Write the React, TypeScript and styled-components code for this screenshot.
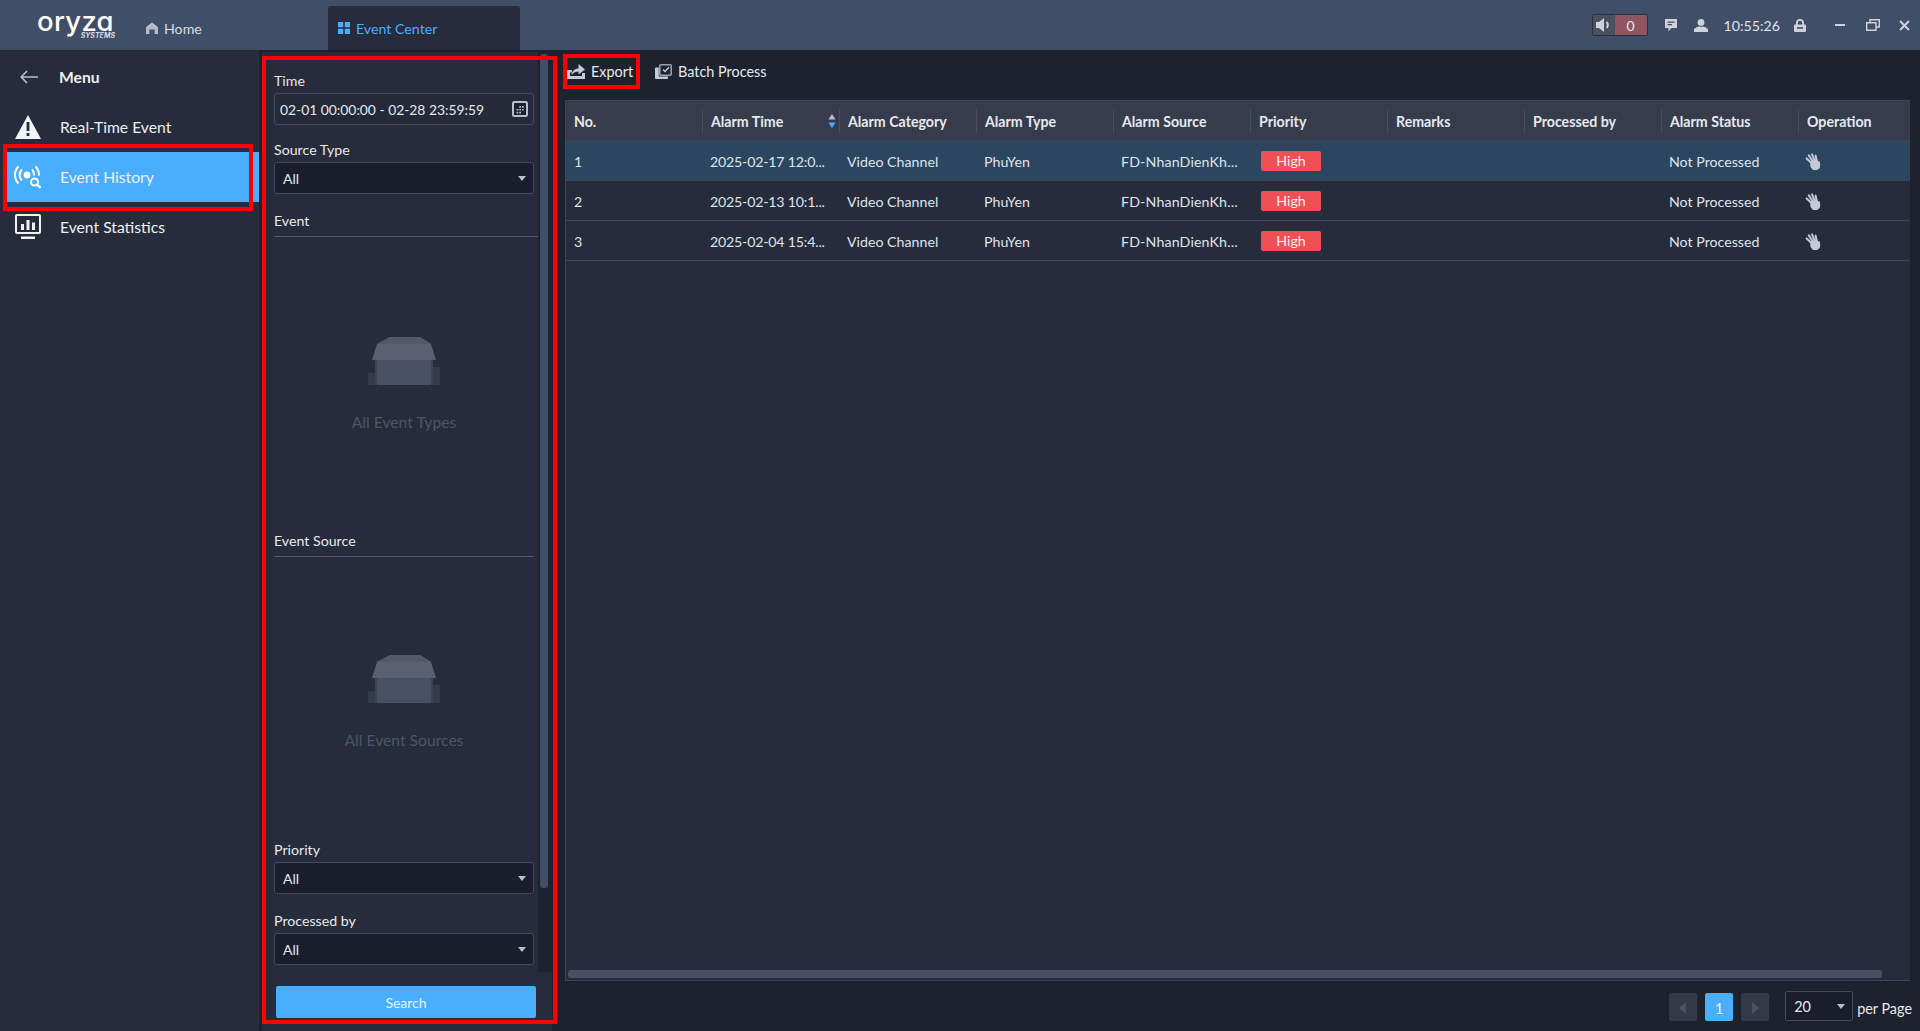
import React from "react";
import styled, { createGlobalStyle } from "styled-components";

const GlobalStyle = createGlobalStyle`
  html, body { margin: 0; padding: 0; height: 100%; background: #1e222e; }
  body { font-family: Lato, "Open Sans", sans-serif; font-size: 14px; color: #e6e9ef; overflow: hidden; }
  * { box-sizing: border-box; }
`;

const columns = ["No.", "Alarm Time", "Alarm Category", "Alarm Type", "Alarm Source", "Priority", "Remarks", "Processed by", "Alarm Status", "Operation"];
const rows = [
  { no: 1, time: "2025-02-17 12:0...", active: true },
  { no: 2, time: "2025-02-13 10:1...", active: false },
  { no: 3, time: "2025-02-04 15:4...", active: false },
];

const Shell = styled.div`
  width: 1920px;
  height: 1031px;
  display: flex;
  flex-direction: column;
  overflow: hidden;
`;

const TopBar = styled.header`
  height: 50px;
  flex: none;
  display: flex;
  align-items: flex-end;
  background: #414e67;
`;

const Logo = styled.div`
  width: 78px;
  height: 37px;
  margin-right: 31px;
  margin-left: 37px;
  align-self: flex-start;
  margin-top: 13px;
  display: flex;
  flex-direction: column;
  color: #fff;
  font-family: Inter, sans-serif;
  font-feature-settings: "cv11";
  font-size: 27.5px;
  font-weight: 500;
  line-height: 17px;
  letter-spacing: 0.3px;
  small {
    margin-top: 2px;
    text-align: right;
    font-size: 7px;
    line-height: 7px;
    font-weight: 700;
    font-style: italic;
    letter-spacing: 0;
    color: #d6dae2;
  }
`;

const HomeLink = styled.div`
  width: 182px;
  height: 50px;
  display: flex;
  align-items: center;
  gap: 6px;
  color: #d9dde5;
  font-size: 14.2px;
  padding-top: 6px;
`;

const ActiveTab = styled.div`
  width: 192px;
  height: 44px;
  display: flex;
  align-items: center;
  gap: 6px;
  padding-left: 10px;
  background: #262c3c;
  border-radius: 3px 3px 0 0;
  color: #4aaeff;
  font-size: 14.2px;
`;

const TopRight = styled.div`
  margin-left: auto;
  height: 50px;
  display: flex;
  align-items: center;
  padding-right: 10px;
  color: #cdd2dc;
`;

const AlarmBox = styled.div`
  width: 56px;
  height: 22px;
  display: flex;
  margin-right: 17px;
  border: 1px solid #2c303b;
  border-radius: 2px;
  overflow: hidden;
`;

const AlarmIcon = styled.div`
  width: 22px;
  background: #4a505e;
  display: flex;
  align-items: center;
  justify-content: center;
`;

const AlarmCount = styled.div`
  flex: 1;
  background: #8f5560;
  text-align: center;
  font-size: 14px;
  line-height: 22px;
  color: #e6e9ef;
`;

const Clock = styled.span`
  margin: 0 14px 0 16px;
  font-size: 14.2px;
  color: #dfe3ea;
`;

const TopIcon = styled.svg<{ $gap?: number }>`
  display: block;
  margin-right: ${(p) => p.$gap ?? 0}px;
  fill: #cdd2dc;
`;

const Body = styled.div`
  flex: 1;
  min-height: 0;
  display: flex;
`;

const Nav = styled.nav`
  width: 262px;
  flex: none;
  background: #262c3c;
  border-right: 3px solid #1e222e;
`;

const NavHead = styled.div`
  height: 52px;
  display: flex;
  align-items: center;
  gap: 21px;
  padding: 2px 0 0 20px;
  font-weight: 700;
  font-size: 15.7px;
  color: #eef0f4;
`;

const NavItem = styled.div<{ $active?: boolean }>`
  height: 50px;
  margin-left: ${(p) => (p.$active ? 3 : 0)}px;
  padding-left: ${(p) => (p.$active ? 11 : 15)}px;
  display: flex;
  align-items: center;
  gap: 19px;
  position: relative;
  font-size: 15.7px;
  color: #eef0f4;
  background: ${(p) => (p.$active ? "#4aaeff" : "transparent")};
`;

const Highlight = styled.div<{ $top: number; $right: number; $bottom: number; $left: number }>`
  position: absolute;
  top: ${(p) => p.$top}px;
  right: ${(p) => p.$right}px;
  bottom: ${(p) => p.$bottom}px;
  left: ${(p) => p.$left}px;
  border: 4px solid #f00;
  pointer-events: none;
  z-index: 5;
`;

const FilterColumn = styled.aside`
  width: 290px;
  flex: none;
  margin-top: 2px;
  display: flex;
  flex-direction: column;
  position: relative;
  background: #262c3c;
`;

const FilterScroll = styled.div`
  flex: 1;
  min-height: 0;
  display: flex;
`;

const FilterForm = styled.div`
  flex: 1;
  min-width: 0;
  padding: 21px 0 0 12px;
  display: flex;
  flex-direction: column;
  > * {
    flex: none;
  }
`;

const ScrollTrack = styled.div`
  width: 14px;
  flex: none;
  background: #1e222e;
  padding: 2px 4px 0 2px;
`;

const ScrollThumb = styled.div`
  height: 834px;
  background: #414e67;
  border-radius: 3px;
`;

const FieldLabel = styled.div`
  font-size: 14.2px;
  line-height: 15px;
  color: #e6e9ef;
  margin-bottom: 5px;
`;

const Field = styled.div<{ $gap?: number; $dark?: boolean }>`
  height: 32px;
  width: 260px;
  display: flex;
  align-items: center;
  justify-content: space-between;
  padding: 0 ${(p) => (p.$dark ? 7 : 5)}px 0 ${(p) => (p.$dark ? 8 : 5)}px;
  background: ${(p) => (p.$dark ? "#1a1d2b" : "#252a39")};
  border: 1px solid #434a5b;
  border-radius: 3px;
  font-size: ${(p) => (p.$dark ? 14 : 13.85)}px;
  color: #e6e9ef;
  margin-bottom: ${(p) => p.$gap ?? 17}px;
`;

const Caret = styled.span`
  width: 0;
  height: 0;
  border-left: 4.5px solid transparent;
  border-right: 4.5px solid transparent;
  border-top: 5px solid #b9bfcc;
`;

const SectionTitle = styled.div<{ $width: number }>`
  width: ${(p) => p.$width}px;
  height: 24px;
  line-height: 15px;
  border-bottom: 1px solid #545b6c;
  font-size: 14.2px;
  color: #e6e9ef;
`;

const EmptyState = styled.div<{ $height: number; $top: number }>`
  width: 260px;
  height: ${(p) => p.$height}px;
  padding-top: ${(p) => p.$top}px;
  display: flex;
  flex-direction: column;
  align-items: center;
  color: #4e5568;
  font-size: 15.7px;
  line-height: 18px;
  gap: 28px;
`;

const FilterFoot = styled.div`
  height: 59px;
  flex: none;
  padding: 14px 16px 0 14px;
  background: #262c3c;
`;

const SearchButton = styled.button`
  width: 260px;
  height: 32px;
  border: 0;
  border-radius: 2px;
  background: #4aaeff;
  color: #e6f3ff;
  font: 14px Lato, sans-serif;
`;

const Main = styled.main`
  flex: 1;
  min-width: 0;
  display: flex;
  flex-direction: column;
  padding: 0 10px 0 13px;
`;

const Toolbar = styled.div`
  height: 50px;
  flex: none;
  display: flex;
  align-items: center;
  gap: 22px;
  padding: 0 0 8px 2px;
`;

const ToolButton = styled.div`
  display: flex;
  align-items: center;
  gap: 6px;
  position: relative;
  font-size: 14.4px;
  color: #e6e9ef;
`;

const TablePanel = styled.section`
  flex: 1;
  min-height: 0;
  background: #262c3c;
  border: 1px solid #3c4456;
  border-right: 0;
  display: flex;
  flex-direction: column;
  overflow: hidden;
`;

const HeadRow = styled.div`
  height: 40px;
  flex: none;
  display: flex;
  align-items: center;
  background: #363c4c;
  border-bottom: 1px solid #3c4456;
`;

const HeadCell = styled.div<{ $first?: boolean }>`
  flex: none;
  width: ${(p) => (p.$first ? 136 : 137)}px;
  height: 24px;
  line-height: 25px;
  padding-left: 8px;
  position: relative;
  font-weight: 700;
  font-size: 14.2px;
  color: #e6e9ef;
  border-left: ${(p) => (p.$first ? "0" : "1px solid #484e5e")};
`;

const SortArrows = styled.svg`
  position: absolute;
  right: 3px;
  top: 4px;
`;

const Row = styled.div<{ $active?: boolean }>`
  height: 40px;
  flex: none;
  display: flex;
  align-items: center;
  padding-top: 1px;
  background: ${(p) => (p.$active ? "#2c4560" : "transparent")};
  border-bottom: 1px solid #3c4456;
`;

const Cell = styled.div<{ $first?: boolean; $track?: number }>`
  flex: none;
  width: ${(p) => (p.$first ? 136 : 137)}px;
  padding-left: 8px;
  font-size: 14.2px;
  letter-spacing: ${(p) => p.$track ?? 0}px;
  color: #dfe3ea;
  white-space: nowrap;
`;

const Badge = styled.span`
  display: block;
  width: 60px;
  height: 20px;
  margin-left: 3px;
  line-height: 20px;
  text-align: center;
  background: #f05055;
  border-radius: 2px;
  color: #fdf0f0;
`;

const HandIcon = styled.svg`
  display: block;
  margin-left: -1px;
`;

const TableSpacer = styled.div`
  flex: 1;
  display: flex;
  align-items: flex-end;
  padding: 0 0 2px 2px;
`;

const HScroll = styled.div`
  width: 1314px;
  height: 8px;
  background: #4a5063;
  border-radius: 3px;
`;

const Pager = styled.div`
  height: 50px;
  flex: none;
  display: flex;
  align-items: center;
  justify-content: flex-end;
  margin-right: -2px;
  padding-top: 2px;
  gap: 8px;
  font-size: 14.4px;
`;

const PageButton = styled.div<{ $current?: boolean }>`
  width: 28px;
  height: 28px;
  display: flex;
  align-items: center;
  justify-content: center;
  padding-top: 2px;
  border-radius: 2px;
  background: ${(p) => (p.$current ? "#4aaeff" : "#333947")};
  color: #eef6ff;
`;

const PerPageSelect = styled.div`
  width: 68px;
  height: 30px;
  margin: 0 -4px 2px 8px;
  display: flex;
  align-items: center;
  justify-content: space-between;
  padding: 0 7px 0 8px;
  background: #1a1d2b;
  border: 1px solid #434a5b;
  border-radius: 2px;
`;

const PerPageLabel = styled.span`
  padding-top: 2px;
  color: #e6e9ef;
`;

const BoxIcon = () => (
  <svg width="72" height="48" viewBox="0 0 72 48">
    <rect x="0" y="36" width="12" height="12" fill="#333a4b" />
    <rect x="60" y="30" width="12" height="18" fill="#333a4b" />
    <rect x="7" y="22" width="58" height="25" fill="#3a4153" />
    <rect x="9" y="22" width="54" height="26" fill="#4a5063" />
    <polygon points="22,0 52,0 63,7 68,23 4,23 9,7" fill="#5a6072" />
    <polygon points="22,0 52,0 63,7 9,7" fill="#525869" />
  </svg>
);

const CalendarIcon = () => (
  <svg width="16" height="16" viewBox="0 0 16 16">
    <rect x="1" y="1" width="14" height="14" rx="1.500" fill="#1e222e" stroke="#b9bfcc" strokeWidth="2" />
    <path d="M7.300 5h1.700v1.700H7.300zM10 5h1.700v1.700H10zM4.600 7.900h1.700v1.700H4.600zM7.300 7.900h1.700v1.700H7.300zM10 7.900h1.700v1.700H10zM4.600 10.800h1.700v1.700H4.600zM7.300 10.800h1.700v1.700H7.300z" fill="#b9bfcc" />
  </svg>
);

const Hand = () => (
  <HandIcon width="16" height="17" viewBox="0 0 16 17">
    <g fill="none" stroke="#c4cad6" strokeLinecap="round" strokeWidth="2">
      <path d="M6 9.500 1.600 5.400M7.500 8 3.800 2.400M9.600 7.500 7 1.400M11.800 8 10.600 2.600" />
    </g>
    <path d="M5 9 12 7l1.500 1.500 1-.5.800 3.500-.6 3.500-2.500 2H8L5.500 14z" fill="#c4cad6" />
  </HandIcon>
);

const Triangle = ({ left }: { left?: boolean }) => (
  <svg width="8" height="12" viewBox="0 0 8 12">
    <path d={left ? "M7 0v12L0 6z" : "M1 0v12l7-6z"} fill="#4a5063" />
  </svg>
);

export default function App() {
  return (
    <Shell>
      <GlobalStyle />
      <TopBar>
        <Logo>
          oryza
          <small>SYSTEMS</small>
        </Logo>
        <HomeLink>
          <svg width="12" height="12" viewBox="0 0 12 12">
            <path d="M6 0.500 12 5v7H8.600V7.600H3.400V12H0V5z" fill="#b4bac7" />
          </svg>
          Home
        </HomeLink>
        <ActiveTab>
          <svg width="12" height="12" viewBox="0 0 12 12">
            <path d="M0 0h5.200v5.200H0zM6.800 0H12v5.200H6.800zM0 6.800h5.200V12H0zM6.800 6.800H12V12H6.800z" fill="#4aaeff" />
          </svg>
          Event Center
        </ActiveTab>
        <TopRight>
          <AlarmBox>
            <AlarmIcon>
              <svg width="15" height="14" viewBox="0 0 15 14">
                <path d="M0 4h3L8 0v14L3 10H0z" fill="#cdd2dc" />
                <path d="M10.500 4a4 4 0 0 1 0 6" fill="none" stroke="#cdd2dc" strokeWidth="2" />
              </svg>
            </AlarmIcon>
            <AlarmCount>0</AlarmCount>
          </AlarmBox>
          <TopIcon width="12" height="13" viewBox="0 0 12 13" $gap={17}>
            <path d="M0 0h12v9H6.400L3.500 12.500V9H0z" />
            <path d="M2.500 2.600h7v1.200h-7zM2.500 5h4.500v1.200H2.500z" fill="#414e67" />
          </TopIcon>
          <TopIcon width="14" height="13" viewBox="0 0 14 13">
            <circle cx="7" cy="3.400" r="3.400" />
            <path d="M0 13v-2.400C0 9 3 8 5 7.400c1 .6 3 .6 4 0 2 .6 5 1.600 5 3.200V13z" />
          </TopIcon>
          <Clock>10:55:26</Clock>
          <TopIcon width="12" height="13" viewBox="0 0 12 13" $gap={29}>
            <path d="M2 5.500V4a4 4 0 0 1 8 0v1.500h1a1 1 0 0 1 1 1V12a1 1 0 0 1-1 1H1a1 1 0 0 1-1-1V6.500a1 1 0 0 1 1-1zM3.800 5.500h4.400V4a2.200 2.200 0 0 0-4.400 0z" />
            <rect x="3" y="8.200" width="6" height="1.600" fill="#414e67" />
          </TopIcon>
          <TopIcon width="10" height="2" viewBox="0 0 10 2" $gap={21}>
            <rect width="10" height="2" />
          </TopIcon>
          <TopIcon width="14" height="12" viewBox="0 0 14 12" $gap={19}>
            <path d="M4 3V0.700h9.300V8H10M0.700 3.700h9.300v7.600H0.700z" fill="none" stroke="#cdd2dc" strokeWidth="1.400" />
          </TopIcon>
          <TopIcon width="11" height="11" viewBox="0 0 11 11">
            <path d="M1 1l9 9M10 1l-9 9" fill="none" stroke="#cdd2dc" strokeWidth="2" />
          </TopIcon>
        </TopRight>
      </TopBar>
      <Body>
        <Nav>
          <NavHead>
            <svg width="18" height="14" viewBox="0 0 18 14">
              <path d="M7 1 1.200 7 7 13M1.500 7H18" fill="none" stroke="#b9bfcc" strokeWidth="1.600" />
            </svg>
            Menu
          </NavHead>
          <NavItem>
            <svg width="26" height="24" viewBox="0 0 26 24">
              <path d="M13 0 26 24H0z" fill="#f1f2f4" />
              <path d="M11.600 7h2.800v9h-2.800zM11.600 18h2.800v3h-2.800z" fill="#262c3c" />
            </svg>
            Real-Time Event
          </NavItem>
          <NavItem $active>
            <svg width="27" height="24" viewBox="0 0 27 24">
              <circle cx="13" cy="10" r="3.400" fill="#fff" />
              <path d="M8 4.500a7.500 7.500 0 0 0 0 11M18 4.500a7.500 7.500 0 0 1 2 6M4.500 1.500a12 12 0 0 0 0 17M21.500 1.500a12 12 0 0 1 3.500 9" fill="none" stroke="#fff" strokeWidth="2" />
              <circle cx="20.500" cy="17" r="3.500" fill="none" stroke="#fff" strokeWidth="2" />
              <path d="M23 19.500 26.500 23" stroke="#fff" strokeWidth="2.400" />
            </svg>
            Event History
            <Highlight $top={-8} $right={6} $bottom={-9} $left={0} />
          </NavItem>
          <NavItem>
            <svg width="26" height="26" viewBox="0 0 26 26">
              <rect x="1" y="1" width="24" height="18" rx="1" fill="none" stroke="#f1f2f4" strokeWidth="2" />
              <path d="M6 10h3v6H6zM11.500 6h3v10h-3zM17 8.500h3V16h-3zM6 22.500h14V25H6z" fill="#f1f2f4" />
            </svg>
            Event Statistics
          </NavItem>
        </Nav>
        <FilterColumn>
          <FilterScroll>
            <FilterForm>
              <FieldLabel>Time</FieldLabel>
              <Field>
                <span>02-01 00:00:00 - 02-28 23:59:59</span>
                <CalendarIcon />
              </Field>
              <FieldLabel>Source Type</FieldLabel>
              <Field $dark $gap={19}>
                <span>All</span>
                <Caret />
              </Field>
              <SectionTitle $width={264}>Event</SectionTitle>
              <EmptyState $height={296} $top={100}>
                <BoxIcon />
                All Event Types
              </EmptyState>
              <SectionTitle $width={260}>Event Source</SectionTitle>
              <EmptyState $height={285} $top={98}>
                <BoxIcon />
                All Event Sources
              </EmptyState>
              <FieldLabel>Priority</FieldLabel>
              <Field $dark $gap={19}>
                <span>All</span>
                <Caret />
              </Field>
              <FieldLabel>Processed by</FieldLabel>
              <Field $dark $gap={0}>
                <span>All</span>
                <Caret />
              </Field>
            </FilterForm>
            <ScrollTrack>
              <ScrollThumb />
            </ScrollTrack>
          </FilterScroll>
          <FilterFoot>
            <SearchButton>Search</SearchButton>
          </FilterFoot>
          <Highlight $top={4} $right={-5} $bottom={7} $left={0} />
        </FilterColumn>
        <Main>
          <Toolbar>
            <ToolButton>
              <svg width="18" height="15" viewBox="0 0 18 15">
                <path d="M0 6h5v2.500H3V12h12V9h3v6H0z" fill="#c4cad6" />
                <path d="M4.500 11C5 7 8 4.500 11.500 4.500V0L18 5.500 11.500 10.500V7.500C9 7.500 6.500 8.500 4.500 11z" fill="#c4cad6" />
              </svg>
              Export
              <Highlight $top={-9} $right={-7} $bottom={-9} $left={-4} />
            </ToolButton>
            <ToolButton>
              <svg width="17" height="15" viewBox="0 0 17 15">
                <rect x="4.800" y="0.800" width="11.400" height="10.400" rx="1" fill="none" stroke="#9aa1b0" strokeWidth="1.600" />
                <path d="M8 5.500 10 7.500 14 3.200" fill="none" stroke="#c4cad6" strokeWidth="1.500" />
                <path d="M0 4.500a1 1 0 0 1 1-1h2.800V12.500H13V14a1 1 0 0 1-1 1H1a1 1 0 0 1-1-1z" fill="#c4cad6" />
              </svg>
              Batch Process
            </ToolButton>
          </Toolbar>
          <TablePanel>
            <HeadRow>
              {columns.map((c, i) => (
                <HeadCell key={c} $first={i === 0}>
                  {c}
                  {c === "Alarm Time" && (
                    <SortArrows width="8" height="16" viewBox="0 0 8 16">
                      <path d="M4 1l3.500 5.500h-7z" fill="#b9bfcc" />
                      <path d="M4 15 0.500 9.500h7z" fill="#4aaeff" />
                    </SortArrows>
                  )}
                </HeadCell>
              ))}
            </HeadRow>
            {rows.map((r) => (
              <Row key={r.no} $active={r.active}>
                <Cell $first>{r.no}</Cell>
                <Cell $track={-0.2}>{r.time}</Cell>
                <Cell>Video Channel</Cell>
                <Cell>PhuYen</Cell>
                <Cell $track={0.15}>FD-NhanDienKh...</Cell>
                <Cell>
                  <Badge>High</Badge>
                </Cell>
                <Cell />
                <Cell />
                <Cell>Not Processed</Cell>
                <Cell>
                  <Hand />
                </Cell>
              </Row>
            ))}
            <TableSpacer>
              <HScroll />
            </TableSpacer>
          </TablePanel>
          <Pager>
            <PageButton>
              <Triangle left />
            </PageButton>
            <PageButton $current>1</PageButton>
            <PageButton>
              <Triangle />
            </PageButton>
            <PerPageSelect>
              <span>20</span>
              <Caret />
            </PerPageSelect>
            <PerPageLabel>per Page</PerPageLabel>
          </Pager>
        </Main>
      </Body>
    </Shell>
  );
}
